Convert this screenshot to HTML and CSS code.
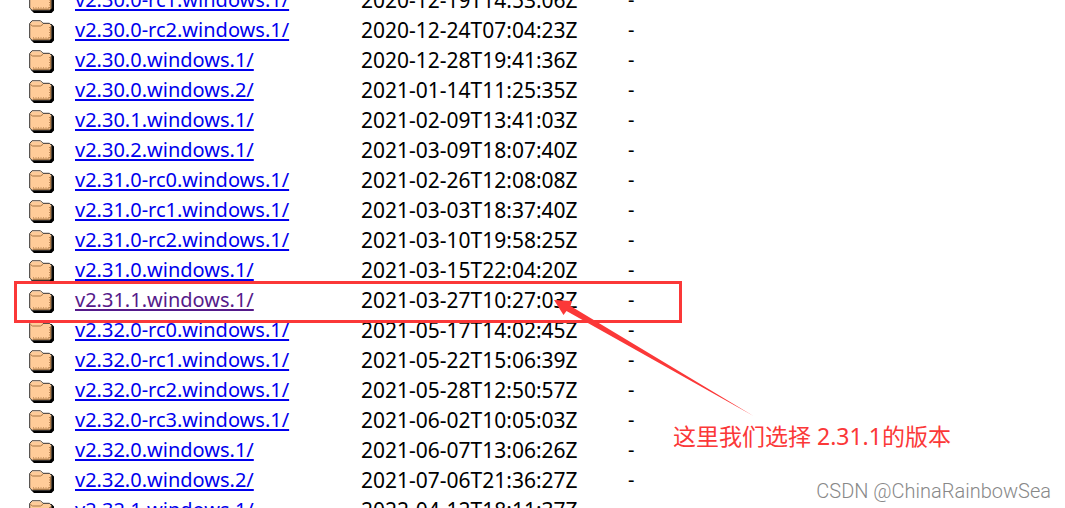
FILE: index.html
```
<!DOCTYPE html>
<html lang="zh-CN">
<head>
    <meta charset="UTF-8">
    <meta name="viewport" content="width=device-width, initial-scale=1.0">
    <title>git-for-windows</title>
    <link rel="stylesheet" href="styles.css">
</head>
<body>
    <!-- Folder icon shared by all rows -->
    <svg class="sprite" aria-hidden="true">
        <symbol id="folder" viewBox="0 0 26 23">
            <path d="M3 18V4H22.500L25 6.500V20.500L22.500 23H5L2 20Z" fill="#000"/>
            <path d="M0.700 3.500L3 0.800H11.500L14 3.300H20.500L22.700 5.500V18L20.500 20.300H3L0.700 18Z" fill="#ffcc99" stroke="#333"/>
            <path d="M3 1.700H11.500L13 3.300" fill="none" stroke="#e8c8a8"/>
            <path d="M1.500 4.500L3.500 6H11.500L14 4.300" fill="none" stroke="#a87848"/>
            <path d="M4 19.200H20.500M21.700 6.500V18.500" fill="none" stroke="#996633"/>
            <path d="M4 17.800H20M20.500 7V18" fill="none" stroke="#b98450" stroke-dasharray="1 1.500"/>
        </symbol>
    </svg>

    <div class="page">
        <table class="listing">
            <tbody id="rows"></tbody>
        </table>

        <div class="highlight"></div>
        <svg class="arrow" viewBox="0 0 200 116" aria-hidden="true">
            <path d="M0 0L18 1L16.500 6L199.500 116L12.500 11L9.500 15Z" fill="#fb3838"/>
        </svg>
        <p class="note">这里我们选择 2.31.1的版本</p>
        <p class="watermark">CSDN @ChinaRainbowSea</p>
    </div>

    <script src="script.js"></script>
</body>
</html>
```
FILE: styles.css
```
body {
    margin: 0;
    background: white;
    color: black;
    font-family: "Noto Sans", "Noto Sans CJK SC", sans-serif;
    font-size: 20px;
}

.sprite {
    display: none;
}

.page {
    position: relative;
    height: 100vh;
    overflow: hidden;
}

/* The list is scrolled by half a row */
.listing {
    margin: -15px 0 0 29px;
    border-collapse: collapse;
    line-height: 30px;
}

.listing td {
    height: 30px;
    padding: 0;
    white-space: nowrap;
}

.listing .icon {
    width: 46px;
}

.listing .name {
    width: 286px;
}

.listing .date {
    width: 267px;
    font-size: 21px;
}

.icon svg {
    display: block;
    width: 26px;
    height: 23px;
    margin-top: 2px;
}

.name a {
    color: #0000ee;
    text-decoration: underline;
    text-decoration-thickness: 2px;
    text-underline-offset: 2px;
}

.name a.visited {
    color: #551a8b;
}

.highlight {
    position: absolute;
    top: 281px;
    left: 14px;
    width: 662px;
    height: 36px;
    border: 3px solid #fb3838;
}

.arrow {
    position: absolute;
    top: 300px;
    left: 554px;
    width: 200px;
    height: 116px;
}

.note {
    position: absolute;
    top: 420px;
    left: 673px;
    margin: 0;
    color: #fb3838;
    font-size: 23px;
    line-height: 32px;
    white-space: nowrap;
}

.watermark {
    position: absolute;
    right: 14px;
    bottom: 5px;
    margin: 0;
    color: #888;
    font-family: Roboto, sans-serif;
    font-size: 20px;
    font-weight: 300;
    line-height: 24px;
}
```
FILE: script.js
```
const versions = [
    ['v2.30.0-rc1.windows.1/', '2020-12-19T14:53:06Z'],
    ['v2.30.0-rc2.windows.1/', '2020-12-24T07:04:23Z'],
    ['v2.30.0.windows.1/', '2020-12-28T19:41:36Z'],
    ['v2.30.0.windows.2/', '2021-01-14T11:25:35Z'],
    ['v2.30.1.windows.1/', '2021-02-09T13:41:03Z'],
    ['v2.30.2.windows.1/', '2021-03-09T18:07:40Z'],
    ['v2.31.0-rc0.windows.1/', '2021-02-26T12:08:08Z'],
    ['v2.31.0-rc1.windows.1/', '2021-03-03T18:37:40Z'],
    ['v2.31.0-rc2.windows.1/', '2021-03-10T19:58:25Z'],
    ['v2.31.0.windows.1/', '2021-03-15T22:04:20Z'],
    ['v2.31.1.windows.1/', '2021-03-27T10:27:03Z'],
    ['v2.32.0-rc0.windows.1/', '2021-05-17T14:02:45Z'],
    ['v2.32.0-rc1.windows.1/', '2021-05-22T15:06:39Z'],
    ['v2.32.0-rc2.windows.1/', '2021-05-28T12:50:57Z'],
    ['v2.32.0-rc3.windows.1/', '2021-06-02T10:05:03Z'],
    ['v2.32.0.windows.1/', '2021-06-07T13:06:26Z'],
    ['v2.32.0.windows.2/', '2021-07-06T21:36:27Z'],
    ['v2.32.1.windows.1/', '2022-04-12T18:11:37Z']
];

const visited = 'v2.31.1.windows.1/';

// One row per version folder
document.getElementById('rows').innerHTML = versions.map(([name, date]) => `
    <tr>
        <td class="icon"><svg aria-hidden="true"><use href="#folder"/></svg></td>
        <td class="name"><a href="#${name}"${name === visited ? ' class="visited"' : ''}>${name}</a></td>
        <td class="date">${date}</td>
        <td class="size">-</td>
    </tr>`).join('');
```
